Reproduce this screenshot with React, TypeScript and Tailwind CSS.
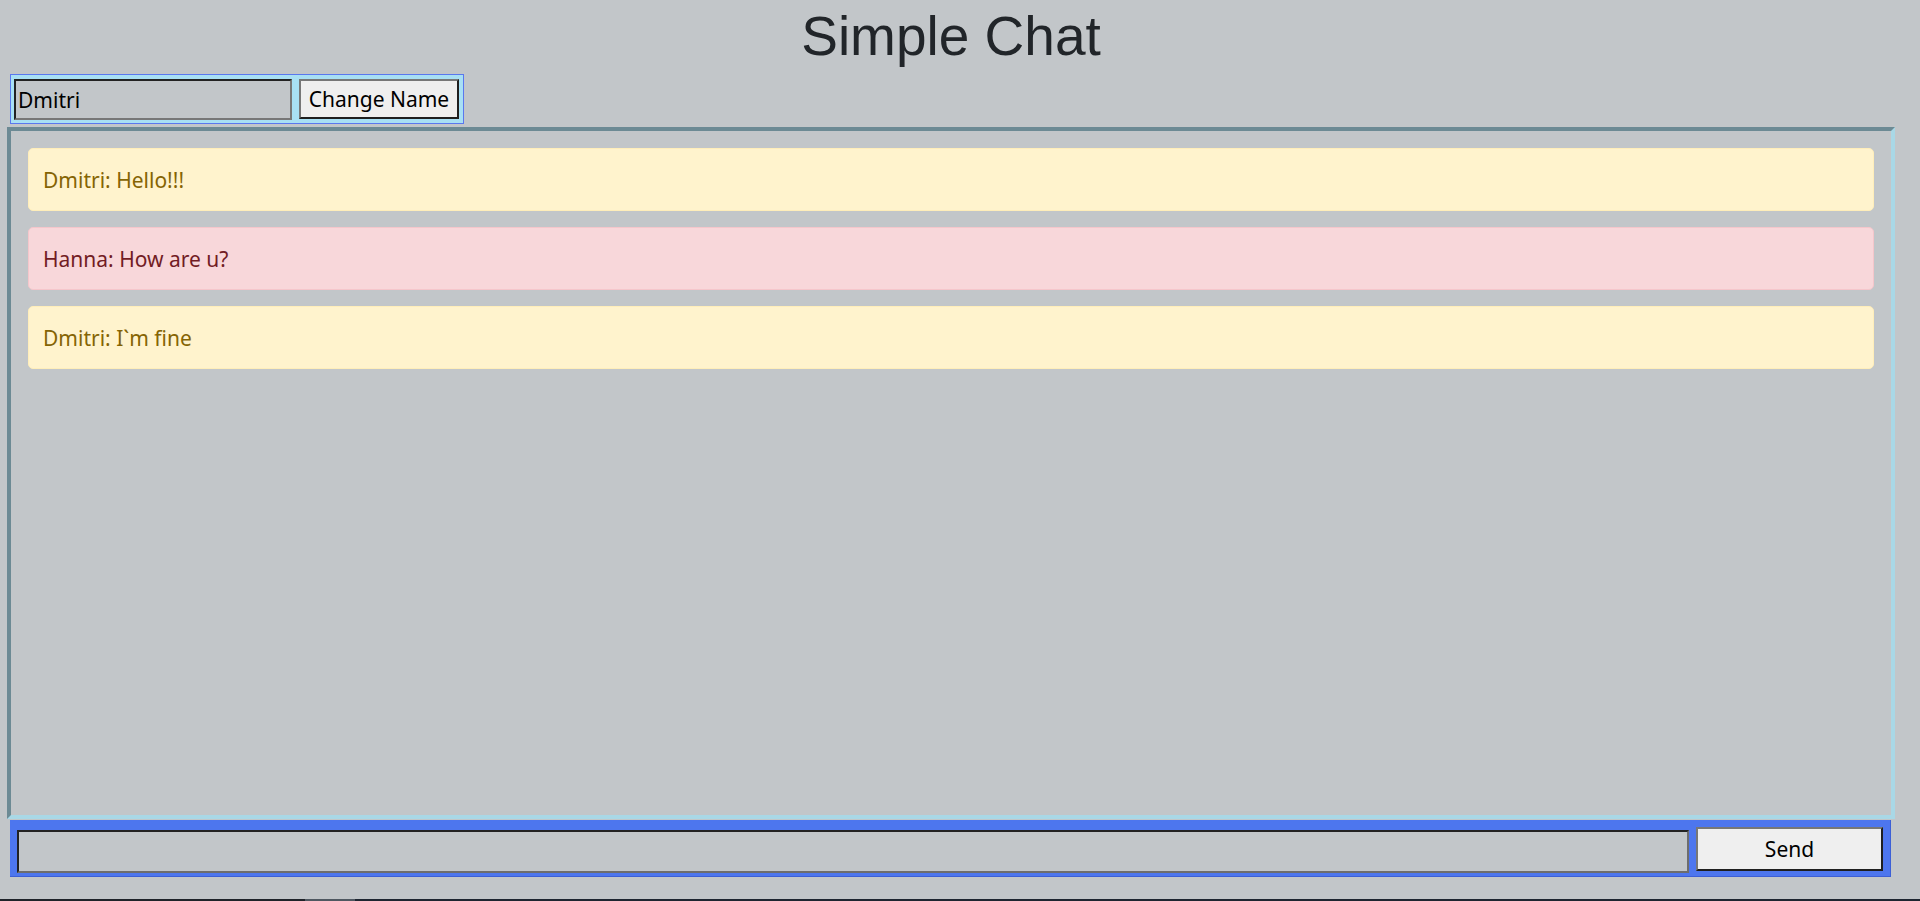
import { useState } from 'react';

interface Message {
  author: string;
  text: string;
}

const ui = '"Noto Sans", "Open Sans", sans-serif';

export default function App() {
  const [name, setName] = useState('Dmitri');
  const [draft, setDraft] = useState('');
  const [messages, setMessages] = useState<Message[]>([
    { author: 'Dmitri', text: 'Hello!!!' },
    { author: 'Hanna', text: 'How are u?' },
    { author: 'Dmitri', text: 'I`m fine' },
  ]);

  const send = () => {
    if (!draft.trim()) return;
    setMessages([...messages, { author: name, text: draft }]);
    setDraft('');
  };

  return (
    <div className="h-[901px] w-full overflow-hidden bg-[#c2c6c9] flex flex-col">
      <div className="flex-1 w-[1902px] flex flex-col">
        <h1
          className="pt-[4px] text-center text-[55px] leading-[64px] text-[#212529]"
          style={{ fontFamily: '"Liberation Sans", Arial, sans-serif' }}
        >
          Simple Chat
        </h1>

        {/* name form */}
        <div className="mt-[6px] ml-[10px] w-[454px] h-[50px] border border-[#5a78ee] bg-[#a8e0f4] flex items-center px-[3px] gap-[7px]">
          <input
            value={name}
            onChange={(e) => setName(e.target.value)}
            className="w-[278px] h-[41px] px-[2px] pt-[2px] bg-[#c2c6c9] text-[21px] text-black outline-none border-2 border-t-[#222] border-l-[#222] border-r-[#777] border-b-[#777]"
            style={{ fontFamily: ui }}
          />
          <button
            className="w-[160px] h-[40px] pt-[2px] bg-[#efefef] text-[21px] text-black border-2 border-t-[#777] border-l-[#777] border-r-[#1f1f1f] border-b-[#1f1f1f]"
            style={{ fontFamily: ui }}
          >
            Change Name
          </button>
        </div>

        {/* messages */}
        <div className="mt-[3px] ml-[7px] w-[1888px] h-[692px] border-4 border-t-[#6c8a94] border-l-[#6c8a94] border-r-[#a9d8e6] border-b-[#a9d8e6] p-[17px] flex flex-col gap-[16px] overflow-y-auto">
          {messages.map((m, i) => {
            const own = m.author === 'Dmitri';
            return (
              <div
                key={i}
                className={
                  own
                    ? 'rounded-[5px] border border-[#ffeeba] bg-[#fff3cd] text-[#856404] px-[14px] pt-[16px] pb-[14px] text-[21px] leading-[31px]'
                    : 'rounded-[5px] border border-[#f5c6cb] bg-[#f8d7da] text-[#721c24] px-[14px] pt-[16px] pb-[14px] text-[21px] leading-[31px]'
                }
                style={{ fontFamily: ui }}
              >
                {m.author}: {m.text}
              </div>
            );
          })}
        </div>

        {/* send form */}
        <div className="mt-[1px] ml-[10px] w-[1881px] h-[57px] bg-[#4d76ee] border-r border-b border-[#3c5fd6] flex items-start pt-[7px] pl-[7px] gap-[7px]">
          <input
            value={draft}
            onChange={(e) => setDraft(e.target.value)}
            onKeyDown={(e) => e.key === 'Enter' && send()}
            className="mt-[3px] w-[1672px] h-[43px] px-[2px] bg-[#c2c6c9] text-[21px] text-black outline-none border-2 border-t-[#222] border-l-[#222] border-r-[#6d6d6d] border-b-[#6d6d6d]"
            style={{ fontFamily: ui }}
          />
          <button
            onClick={send}
            className="w-[187px] h-[44px] pt-[2px] bg-[#efefef] text-[21px] text-black border-2 border-t-[#777] border-l-[#777] border-r-[#1f1f1f] border-b-[#1f1f1f]"
            style={{ fontFamily: ui }}
          >
            Send
          </button>
        </div>
      </div>

      <div className="h-[2px] w-full flex">
        <div className="w-[305px] bg-[#1f2329]" />
        <div className="w-[50px] bg-[#4f5861]" />
        <div className="flex-1 bg-[#1e2631]" />
      </div>
    </div>
  );
}
